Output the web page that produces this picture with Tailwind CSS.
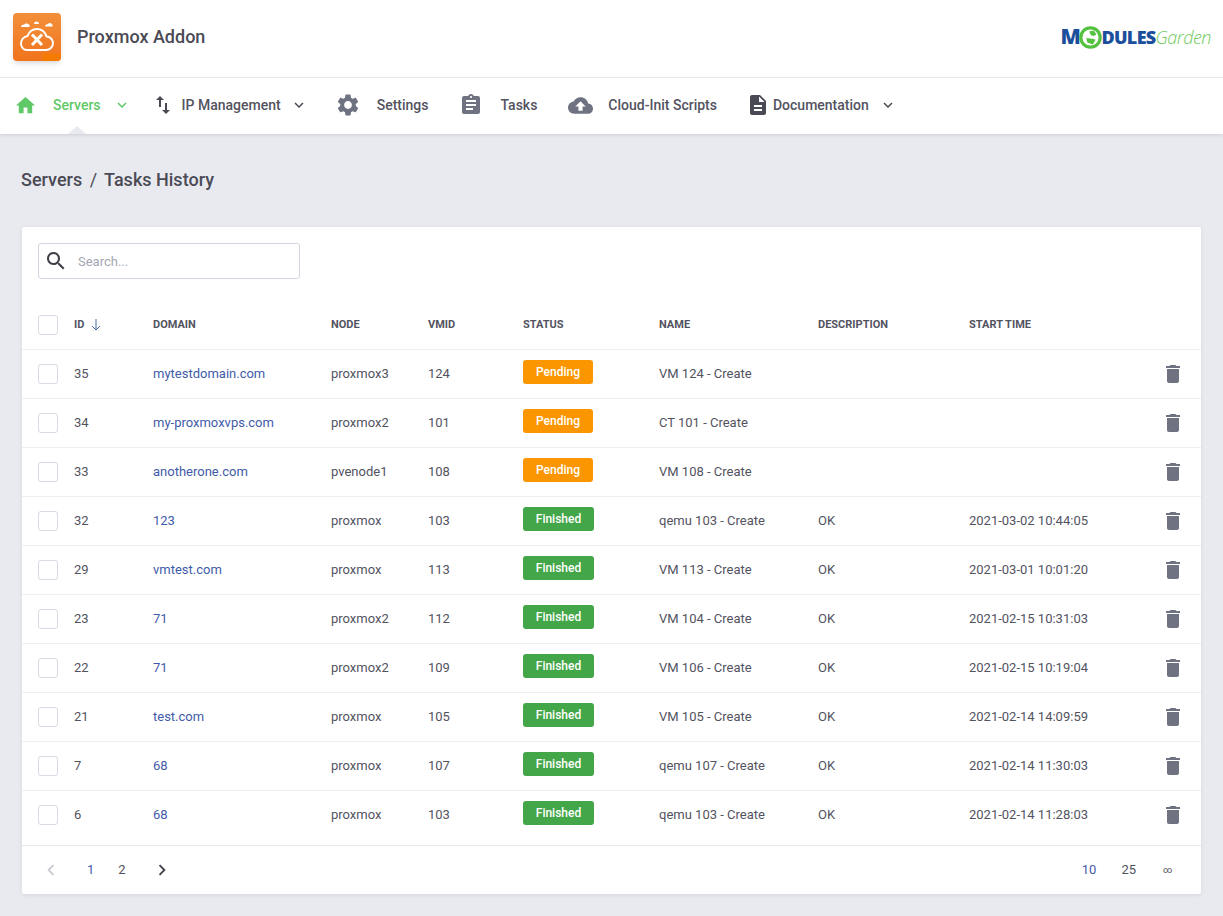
<!DOCTYPE html>
<html lang="en">
<head>
  <meta charset="UTF-8">
  <title>Proxmox Addon - Tasks History</title>
  <script src="https://cdn.jsdelivr.net/npm/@tailwindcss/browser@4"></script>
</head>
<body class="bg-[#e9eaf0] font-['Roboto',sans-serif] text-[#53535f] h-[916px] overflow-hidden">
  <svg class="hidden">
    <symbol id="trash" viewBox="0 0 24 24"><path d="M6 19c0 1.1.9 2 2 2h8c1.1 0 2-.9 2-2V7H6v12zM19 4h-3.5l-1-1h-5l-1 1H5v2h14V4z"/></symbol>
    <symbol id="chev" viewBox="0 0 24 24"><path d="M7.41 8.59L12 13.17l4.59-4.58L18 10l-6 6-6-6z"/></symbol>
  </svg>

  <!-- Header -->
  <header class="bg-white h-[78px] border-b border-[#eeeef2] flex items-center justify-between pl-[13px] pr-[12px] pb-[3px]">
    <div class="flex items-center">
      <div class="relative overflow-hidden w-[48px] h-[48px] rounded-[4px] bg-gradient-to-b from-[#f28f3b] to-[#f0741a] shadow-md flex items-center justify-center">
        <svg width="36" height="36" viewBox="0 0 36 36" fill="none">
          <path d="M8 31H27c4 0 7-3 7-7 0-3.500-3-6.500-6.500-6.500C26 13 22.500 10 18 10c-4.500 0-8 3-9.500 7C5 17.500 2 20.500 2 24.500 2 28 4.500 31 8 31z" stroke="#fff" stroke-width="2"/>
          <path d="M13 15.500l10 10.500M23 15.500L13 26" stroke="#fff" stroke-width="3"/>
          <path d="M2 8c0-1.500 1.500-2.500 3-2.500C6 4 9 4 10 5.500 11 6 11 8 10 8z" fill="#fff"/>
          <path d="M15 5c0-1.500 1-2.500 2.500-2.500S20 3.500 20 5z" fill="#fff"/>
          <path d="M26 7.500c0-1.500 1.500-2.500 3-2.500 1-1.500 3.500-1 4 .5 1 .5 1 2 0 2z" fill="#fff"/>
        </svg>
        <span class="absolute right-0 bottom-0 w-[18px] h-[7px] bg-[#f47a00]"></span>
      </div>
      <span class="ml-4 pb-[2px] text-[18px] font-medium text-[#4a4a55]">Proxmox Addon</span>
    </div>
    <div class="flex items-center font-['Open_Sans',sans-serif]">
      <span class="text-[21px] font-extrabold text-[#1b4f9c] tracking-[-0.5px]">M</span>
      <svg class="-mx-px" width="23" height="23" viewBox="0 0 25 25">
        <circle cx="12.500" cy="12.500" r="10.500" fill="#fff" stroke="#55c23f" stroke-width="3.500"/>
        <path d="M11 6l5-1 3 4-3 2-3-1zM8 13l8 1 2 1-3 5-6-2z" fill="#55c23f"/>
      </svg>
      <span class="text-[18px] font-extrabold text-[#1b4f9c] tracking-[-0.7px]">DULES</span>
      <span class="text-[18px] font-light italic text-[#6fcb5c] tracking-[-0.5px]">Garden</span>
    </div>
  </header>

  <!-- Nav -->
  <nav class="relative bg-white h-[56px] pb-[2px] shadow-[0_1px_4px_rgba(0,0,0,0.12)] flex items-center pl-[14px] text-[14px] font-medium">
    <a class="flex items-center text-[#5fc968]">
      <svg class="w-[23px] h-[23px] fill-[#5fc968]" viewBox="0 0 24 24"><path d="M10 20v-6h4v6h5v-8h3L12 3 2 12h3v8z"/></svg>
      <span class="ml-[16px]">Servers</span>
      <svg class="ml-[12px] w-[18px] h-[18px] fill-[#5fc968]"><use href="#chev"/></svg>
    </a>
    <a class="flex items-center ml-[20px]">
      <svg class="w-[24px] h-[24px] fill-[#4a4a55]" viewBox="0 0 24 24"><path d="M16 17.010V10h-2v7.010h-3L15 21l4-3.990h-3zM9 3L5 6.990h3V14h2V6.990h3L9 3z"/></svg>
      <span class="ml-[7px]">IP Management</span>
      <svg class="ml-[9px] w-[18px] h-[18px] fill-[#4a4a55]"><use href="#chev"/></svg>
    </a>
    <a class="flex items-center ml-[27px]">
      <svg class="w-[26px] h-[26px] fill-[#6f7280]" viewBox="0 0 24 24"><path d="M19.140 12.940c.04-.3.06-.61.06-.94 0-.32-.02-.64-.07-.94l2.030-1.580c.18-.14.23-.41.12-.61l-1.920-3.320c-.12-.22-.37-.29-.59-.22l-2.390.96c-.5-.38-1.030-.7-1.620-.94l-.36-2.540c-.04-.24-.24-.41-.48-.41h-3.840c-.24 0-.43.17-.47.41l-.36 2.540c-.59.24-1.130.57-1.620.94l-2.390-.96c-.22-.08-.47 0-.59.22L2.740 8.870c-.12.21-.08.47.12.61l2.030 1.580c-.05.3-.09.63-.09.94s.02.64.07.94l-2.030 1.580c-.18.14-.23.41-.12.61l1.920 3.320c.12.22.37.29.59.22l2.390-.96c.5.38 1.030.7 1.620.94l.36 2.540c.05.24.24.41.48.41h3.840c.24 0 .44-.17.47-.41l.36-2.540c.59-.24 1.130-.56 1.620-.94l2.390.96c.22.08.47 0 .59-.22l1.920-3.320c.12-.22.07-.47-.12-.61l-2.010-1.580zM12 15.600c-1.980 0-3.600-1.620-3.600-3.600s1.620-3.600 3.600-3.600 3.600 1.620 3.600 3.600-1.620 3.600-3.600 3.600z"/></svg>
      <span class="ml-[16px]">Settings</span>
    </a>
    <a class="flex items-center ml-[31px]">
      <svg class="w-[24px] h-[24px] fill-[#6f7280]" viewBox="0 0 24 24"><path d="M19 3h-4.180C14.400 1.840 13.300 1 12 1c-1.300 0-2.400.84-2.820 2H5c-1.100 0-2 .9-2 2v14c0 1.100.9 2 2 2h14c1.100 0 2-.9 2-2V5c0-1.100-.9-2-2-2zm-7 0c.55 0 1 .45 1 1s-.45 1-1 1-1-.45-1-1 .45-1 1-1zm2 14H7v-2h7v2zm3-4H7v-2h10v2zm0-4H7V7h10v2z"/></svg>
      <span class="ml-[17px]">Tasks</span>
    </a>
    <a class="flex items-center ml-[31px]">
      <svg class="w-[25px] h-[25px] fill-[#6f7280]" viewBox="0 0 24 24"><path d="M19.350 10.040C18.670 6.590 15.640 4 12 4 9.110 4 6.600 5.640 5.350 8.040 2.340 8.360 0 10.910 0 14c0 3.310 2.690 6 6 6h13c2.760 0 5-2.240 5-5 0-2.640-2.050-4.780-4.650-4.960zM14 13v4h-4v-4H7l5-5 5 5h-3z"/></svg>
      <span class="ml-[15px]">Cloud-Init Scripts</span>
    </a>
    <a class="flex items-center ml-[29px]">
      <svg class="w-[24px] h-[24px] fill-[#4a4a55]" viewBox="0 0 24 24"><path d="M14 2H6c-1.100 0-1.990.9-1.990 2L4 20c0 1.100.89 2 1.990 2H18c1.100 0 2-.9 2-2V8l-6-6zm2 16H8v-2h8v2zm0-4H8v-2h8v2zm-3-5V3.500L18.500 9H13z"/></svg>
      <span class="ml-[3px]">Documentation</span>
      <svg class="ml-[10px] w-[18px] h-[18px] fill-[#4a4a55]"><use href="#chev"/></svg>
    </a>
    <span class="absolute left-[68px] bottom-0 w-0 h-0 border-x-[9px] border-x-transparent border-b-[8px] border-b-[#e9eaf0]"></span>
  </nav>

  <main class="pl-[22px] pr-[22px]">
    <h1 class="pt-[35px] pb-[36px] -ml-px text-[18px] leading-[22px] font-medium text-[#4a4a55]">Servers <span class="font-normal mx-[3px]">/</span> Tasks History</h1>

    <section class="bg-white rounded-[2px] shadow-[0_1px_4px_rgba(0,0,0,0.08)] h-[667px] flex flex-col">
      <div class="pl-4 pt-4 h-[72px]">
        <label class="w-[262px] h-[36px] rounded-[3px] border border-[#d5d6e0] flex items-center pl-[5px]">
          <svg class="w-[24px] h-[24px] fill-[#3f3f4a]" viewBox="0 0 24 24"><path d="M15.500 14h-.79l-.28-.27C15.410 12.590 16 11.110 16 9.500 16 5.910 13.090 3 9.500 3S3 5.910 3 9.500 5.910 16 9.500 16c1.610 0 3.090-.59 4.230-1.570l.27.28v.79l5 4.990L20.490 19l-4.990-5zm-6 0C7.010 14 5 11.990 5 9.500S7.010 5 9.500 5 14 7.010 14 9.500 11.990 14 9.500 14z"/></svg>
          <input class="ml-[10px] pt-px w-[200px] text-[13px] outline-none placeholder:text-[#a5a7b2]" placeholder="Search...">
        </label>
      </div>

      <table class="w-full table-fixed text-[13px]">
        <colgroup>
          <col class="w-[52px]"><col class="w-[79px]"><col class="w-[178px]"><col class="w-[97px]"><col class="w-[95px]"><col class="w-[136px]"><col class="w-[159px]"><col class="w-[151px]"><col class="w-[190px]"><col>
        </colgroup>
        <thead>
          <tr class="h-[50px] border-b border-[#eeeef3] text-left text-[11px] font-bold text-[#53535f]">
            <th class="pl-4 pt-[2px]"><span class="block w-[20px] h-[20px] rounded-[3px] border border-[#d9dae3]"></span></th>
            <th class="pt-[2px] font-bold"><span class="flex items-center">ID<svg class="ml-[7px] w-[10px] h-[12px] stroke-[#4f6aa8] fill-none" viewBox="0 0 10 12"><path d="M5 0v11M1 7l4 4 4-4"/></svg></span></th>
            <th class="pt-[2px] font-bold">DOMAIN</th>
            <th class="pt-[2px] font-bold">NODE</th>
            <th class="pt-[2px] font-bold">VMID</th>
            <th class="pt-[2px] font-bold">STATUS</th>
            <th class="pt-[2px] font-bold">NAME</th>
            <th class="pt-[2px] font-bold">DESCRIPTION</th>
            <th class="pt-[2px] font-bold">START TIME</th>
            <th></th>
          </tr>
        </thead>
        <tbody>
          <tr class="h-[49px] border-b border-[#eeeef3]">
            <td class="pl-4"><span class="block w-[20px] h-[20px] rounded-[3px] border border-[#d9dae3]"></span></td>
            <td>35</td><td class="text-[#3f5ba9]">mytestdomain.com</td><td>proxmox3</td><td>124</td>
            <td><span class="block w-[70px] h-[24px] -mt-[3px] rounded-[3px] bg-[#fb9600] text-white text-[12px] font-medium leading-[24px] text-center">Pending</span></td>
            <td>VM 124 - Create</td><td></td><td></td>
            <td><svg class="w-[24px] h-[24px] ml-[2px] fill-[#6f7280]"><use href="#trash"/></svg></td>
          </tr>
          <tr class="h-[49px] border-b border-[#eeeef3]">
            <td class="pl-4"><span class="block w-[20px] h-[20px] rounded-[3px] border border-[#d9dae3]"></span></td>
            <td>34</td><td class="text-[#3f5ba9]">my-proxmoxvps.com</td><td>proxmox2</td><td>101</td>
            <td><span class="block w-[70px] h-[24px] -mt-[3px] rounded-[3px] bg-[#fb9600] text-white text-[12px] font-medium leading-[24px] text-center">Pending</span></td>
            <td>CT 101 - Create</td><td></td><td></td>
            <td><svg class="w-[24px] h-[24px] ml-[2px] fill-[#6f7280]"><use href="#trash"/></svg></td>
          </tr>
          <tr class="h-[49px] border-b border-[#eeeef3]">
            <td class="pl-4"><span class="block w-[20px] h-[20px] rounded-[3px] border border-[#d9dae3]"></span></td>
            <td>33</td><td class="text-[#3f5ba9]">anotherone.com</td><td>pvenode1</td><td>108</td>
            <td><span class="block w-[70px] h-[24px] -mt-[3px] rounded-[3px] bg-[#fb9600] text-white text-[12px] font-medium leading-[24px] text-center">Pending</span></td>
            <td>VM 108 - Create</td><td></td><td></td>
            <td><svg class="w-[24px] h-[24px] ml-[2px] fill-[#6f7280]"><use href="#trash"/></svg></td>
          </tr>
          <tr class="h-[49px] border-b border-[#eeeef3]">
            <td class="pl-4"><span class="block w-[20px] h-[20px] rounded-[3px] border border-[#d9dae3]"></span></td>
            <td>32</td><td class="text-[#3f5ba9]">123</td><td>proxmox</td><td>103</td>
            <td><span class="block w-[71px] h-[24px] -mt-[3px] rounded-[3px] bg-[#43a648] text-white text-[12px] font-medium leading-[24px] text-center">Finished</span></td>
            <td>qemu 103 - Create</td><td>OK</td><td>2021-03-02 10:44:05</td>
            <td><svg class="w-[24px] h-[24px] ml-[2px] fill-[#6f7280]"><use href="#trash"/></svg></td>
          </tr>
          <tr class="h-[49px] border-b border-[#eeeef3]">
            <td class="pl-4"><span class="block w-[20px] h-[20px] rounded-[3px] border border-[#d9dae3]"></span></td>
            <td>29</td><td class="text-[#3f5ba9]">vmtest.com</td><td>proxmox</td><td>113</td>
            <td><span class="block w-[71px] h-[24px] -mt-[3px] rounded-[3px] bg-[#43a648] text-white text-[12px] font-medium leading-[24px] text-center">Finished</span></td>
            <td>VM 113 - Create</td><td>OK</td><td>2021-03-01 10:01:20</td>
            <td><svg class="w-[24px] h-[24px] ml-[2px] fill-[#6f7280]"><use href="#trash"/></svg></td>
          </tr>
          <tr class="h-[49px] border-b border-[#eeeef3]">
            <td class="pl-4"><span class="block w-[20px] h-[20px] rounded-[3px] border border-[#d9dae3]"></span></td>
            <td>23</td><td class="text-[#3f5ba9]">71</td><td>proxmox2</td><td>112</td>
            <td><span class="block w-[71px] h-[24px] -mt-[3px] rounded-[3px] bg-[#43a648] text-white text-[12px] font-medium leading-[24px] text-center">Finished</span></td>
            <td>VM 104 - Create</td><td>OK</td><td>2021-02-15 10:31:03</td>
            <td><svg class="w-[24px] h-[24px] ml-[2px] fill-[#6f7280]"><use href="#trash"/></svg></td>
          </tr>
          <tr class="h-[49px] border-b border-[#eeeef3]">
            <td class="pl-4"><span class="block w-[20px] h-[20px] rounded-[3px] border border-[#d9dae3]"></span></td>
            <td>22</td><td class="text-[#3f5ba9]">71</td><td>proxmox2</td><td>109</td>
            <td><span class="block w-[71px] h-[24px] -mt-[3px] rounded-[3px] bg-[#43a648] text-white text-[12px] font-medium leading-[24px] text-center">Finished</span></td>
            <td>VM 106 - Create</td><td>OK</td><td>2021-02-15 10:19:04</td>
            <td><svg class="w-[24px] h-[24px] ml-[2px] fill-[#6f7280]"><use href="#trash"/></svg></td>
          </tr>
          <tr class="h-[49px] border-b border-[#eeeef3]">
            <td class="pl-4"><span class="block w-[20px] h-[20px] rounded-[3px] border border-[#d9dae3]"></span></td>
            <td>21</td><td class="text-[#3f5ba9]">test.com</td><td>proxmox</td><td>105</td>
            <td><span class="block w-[71px] h-[24px] -mt-[3px] rounded-[3px] bg-[#43a648] text-white text-[12px] font-medium leading-[24px] text-center">Finished</span></td>
            <td>VM 105 - Create</td><td>OK</td><td>2021-02-14 14:09:59</td>
            <td><svg class="w-[24px] h-[24px] ml-[2px] fill-[#6f7280]"><use href="#trash"/></svg></td>
          </tr>
          <tr class="h-[49px] border-b border-[#eeeef3]">
            <td class="pl-4"><span class="block w-[20px] h-[20px] rounded-[3px] border border-[#d9dae3]"></span></td>
            <td>7</td><td class="text-[#3f5ba9]">68</td><td>proxmox</td><td>107</td>
            <td><span class="block w-[71px] h-[24px] -mt-[3px] rounded-[3px] bg-[#43a648] text-white text-[12px] font-medium leading-[24px] text-center">Finished</span></td>
            <td>qemu 107 - Create</td><td>OK</td><td>2021-02-14 11:30:03</td>
            <td><svg class="w-[24px] h-[24px] ml-[2px] fill-[#6f7280]"><use href="#trash"/></svg></td>
          </tr>
          <tr class="h-[49px]">
            <td class="pl-4"><span class="block w-[20px] h-[20px] rounded-[3px] border border-[#d9dae3]"></span></td>
            <td>6</td><td class="text-[#3f5ba9]">68</td><td>proxmox</td><td>103</td>
            <td><span class="block w-[71px] h-[24px] -mt-[3px] rounded-[3px] bg-[#43a648] text-white text-[12px] font-medium leading-[24px] text-center">Finished</span></td>
            <td>qemu 103 - Create</td><td>OK</td><td>2021-02-14 11:28:03</td>
            <td><svg class="w-[24px] h-[24px] ml-[2px] fill-[#6f7280]"><use href="#trash"/></svg></td>
          </tr>
        </tbody>
      </table>

      <!-- Pagination -->
      <div class="mt-[6px] flex-1 border-t border-[#e8e8ee] flex items-center justify-between text-[13px]">
        <div class="flex items-center pl-[18px]">
          <svg class="w-[22px] h-[22px] fill-[#c9cbd3]" viewBox="0 0 24 24"><path d="M15.410 7.410L14 6l-6 6 6 6 1.410-1.410L10.830 12z"/></svg>
          <span class="ml-[25px] text-[#3f5ba9]">1</span>
          <span class="ml-[24px]">2</span>
          <svg class="ml-[25px] w-[22px] h-[22px] fill-[#3f3f4a]" viewBox="0 0 24 24"><path d="M10 6L8.590 7.410 13.170 12l-4.580 4.590L10 18l6-6z"/></svg>
        </div>
        <div class="flex items-center pr-[29px]">
          <span class="text-[#3f5ba9]">10</span>
          <span class="ml-[25px]">25</span>
          <span class="ml-[27px] w-[9px] text-[9px] leading-none">∞</span>
        </div>
      </div>
    </section>
  </main>
</body>
</html>
